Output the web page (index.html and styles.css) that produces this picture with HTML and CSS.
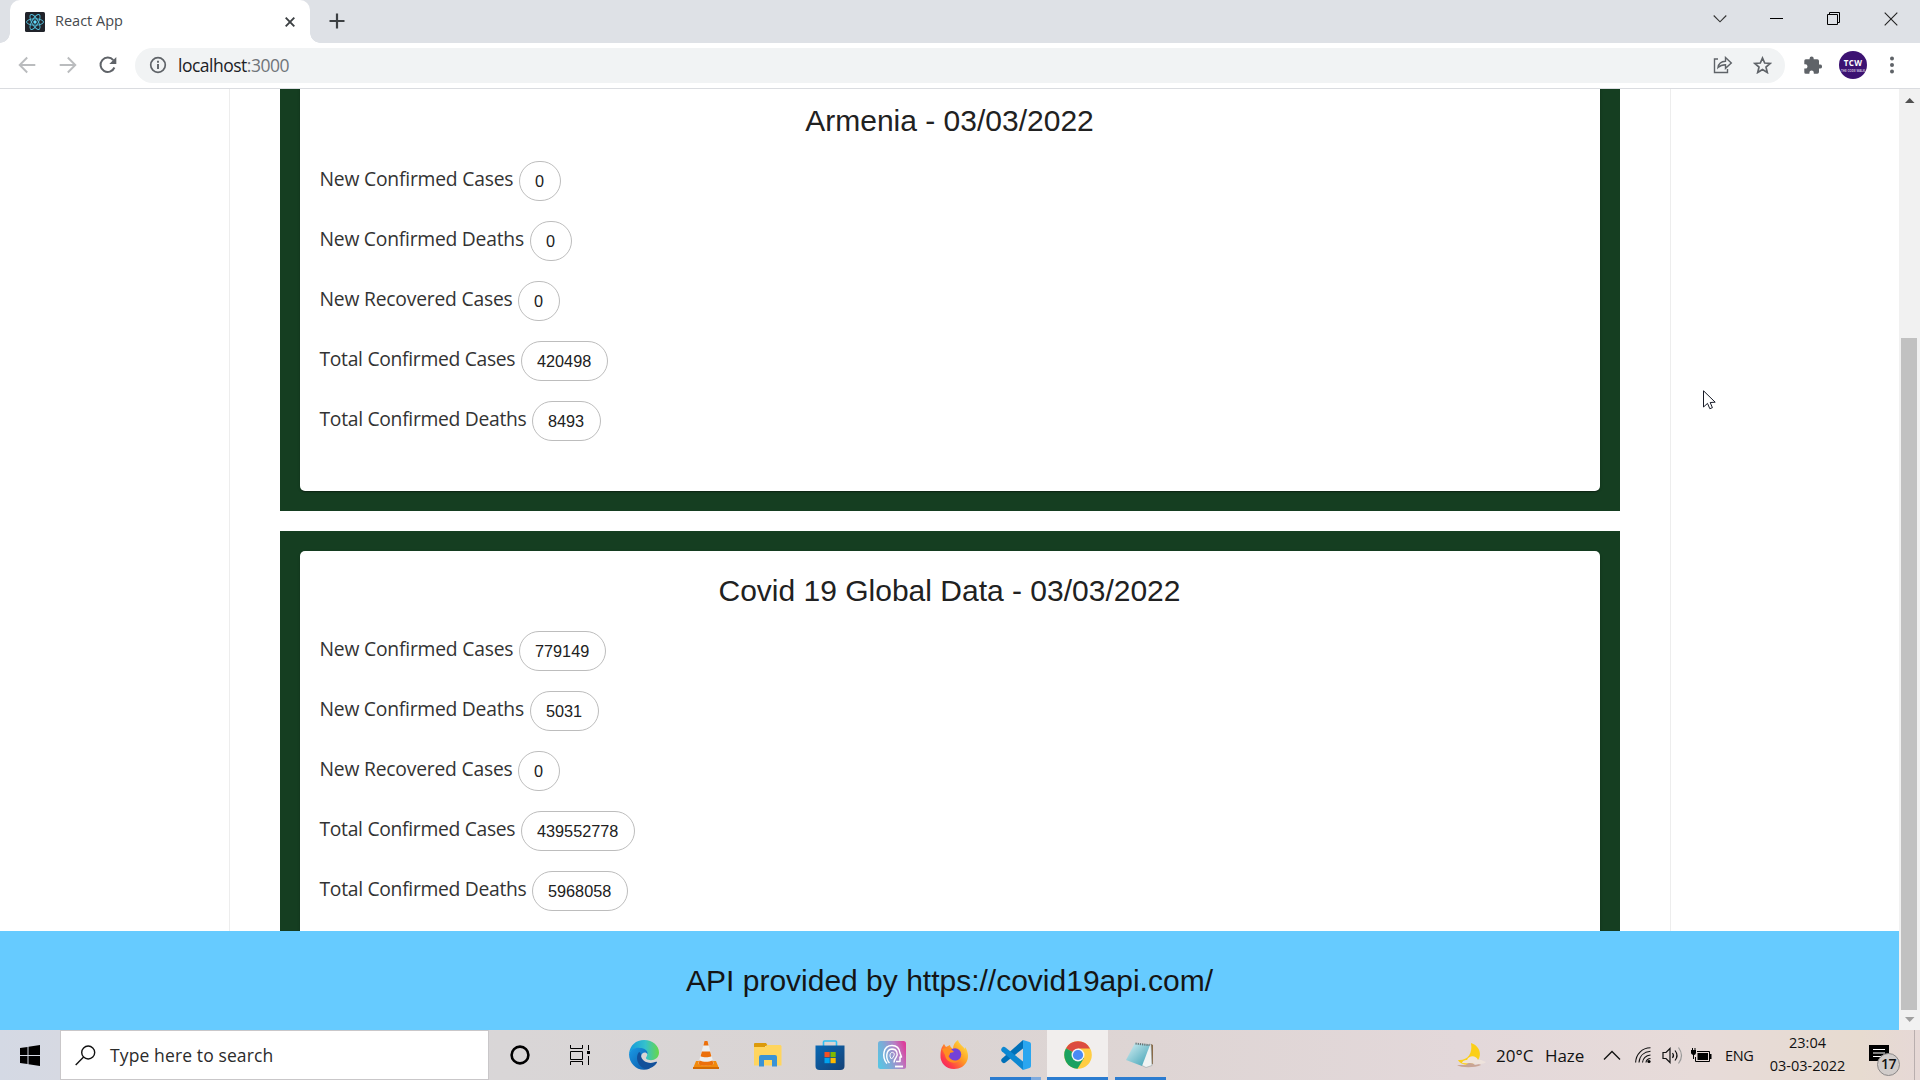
FILE: index.html
```html
<!DOCTYPE html>
<html lang="en">
<head>
<meta charset="utf-8">
<title>React App</title>
<link rel="stylesheet" href="styles.css">
</head>
<body>
<header class="tabstrip">
  <div class="tab">
    <svg class="favicon" width="20" height="20" viewBox="0 0 20 20"><rect width="20" height="20" rx="1.5" fill="#20232a"/><g fill="none" stroke="#53c1de" stroke-width=".9"><ellipse cx="10" cy="10" rx="8.5" ry="3.2"/><ellipse cx="10" cy="10" rx="8.5" ry="3.2" transform="rotate(60 10 10)"/><ellipse cx="10" cy="10" rx="8.5" ry="3.2" transform="rotate(120 10 10)"/></g><circle cx="10" cy="10" r="1.7" fill="#61dafb"/></svg>
    <span class="tab-title">React App</span>
    <svg class="tab-close" width="10" height="10" viewBox="0 0 10 10"><path d="M.7.7l8.6 8.6M9.3.7L.7 9.3" stroke="#3c4043" stroke-width="1.9"/></svg>
  </div>
  <svg class="new-tab" width="16" height="16" viewBox="0 0 16 16"><path d="M8 .5v15M.5 8h15" stroke="#3c4043" stroke-width="2.2"/></svg>
  <div class="window-controls">
    <svg width="14" height="14" viewBox="0 0 14 14"><path d="M.7 3.500l6.300 6.300L13.300 3.500" fill="none" stroke="#333" stroke-width="1.1"/></svg>
    <svg width="14" height="14" viewBox="0 0 14 14"><path d="M0 6.500h13" stroke="#000" stroke-width="1"/></svg>
    <svg width="14" height="14" viewBox="0 0 14 14"><path d="M2.500 2.500v-2h10v10h-2M.5 2.500h10v10H.5z" fill="none" stroke="#000"/></svg>
    <svg width="14" height="14" viewBox="0 0 14 14"><path d="M.7.7l12.600 12.600M13.300.7L.7 13.300" stroke="#222" stroke-width="1.100"/></svg>
  </div>
</header>
<nav class="toolbar">
  <svg class="tool-back" width="18" height="18" viewBox="0 0 18 18"><path d="M17.300 9H2M9.200 1.500L1.700 9l7.500 7.500" fill="none" stroke="#babcbe" stroke-width="1.900"/></svg>
  <svg class="tool-forward" width="18" height="18" viewBox="0 0 18 18"><path d="M.7 9H16M8.800 1.500L16.300 9l-7.500 7.500" fill="none" stroke="#babcbe" stroke-width="1.900"/></svg>
  <svg class="tool-reload" width="18" height="18" viewBox="0 0 18 18"><path d="M15.400 11.500A7.200 7.200 0 1 1 14.300 4.200" fill="none" stroke="#5f6368" stroke-width="2"/><path d="M17.300 1v7h-7z" fill="#5f6368"/></svg>
  <div class="omnibox">
    <svg class="info" width="18" height="18" viewBox="0 0 18 18"><circle cx="9" cy="9" r="7.300" fill="none" stroke="#5f6368" stroke-width="1.700"/><path d="M9 8v5M9 4.700v2" stroke="#5f6368" stroke-width="1.900"/></svg>
    <span class="url">localhost<span class="port">:3000</span></span>
    <svg class="share" width="20" height="18" viewBox="0 0 20 18"><path d="M5 3H1.500v13.500h13V13M5 11.500C5.500 8 8 5.400 12.500 5.200V1.500L18.300 7l-5.800 5.300V8.800C9 8.800 7 9.600 5 11.500z" fill="none" stroke="#5f6368" stroke-width="1.400"/></svg>
    <svg class="star" width="19" height="18" viewBox="0 0 19 18"><path d="M9.500 2l2.200 5 5.500.5-4.200 3.600 1.300 5.400-4.800-2.900-4.800 2.900L6 11.100 1.800 7.500 7.300 7z" fill="none" stroke="#5f6368" stroke-width="1.700"/></svg>
  </div>
  <svg class="puzzle" width="18" height="18" viewBox="0 0 18 18"><path d="M16 8.500h-1V5a1.700 1.700 0 0 0-1.700-1.700H9.700V2.500a2 2 0 0 0-4.100 0v.8H1.800A1.500 1.500 0 0 0 .3 4.800v3.400h1a2.200 2.200 0 0 1 0 4.400h-1v3.600a1.500 1.500 0 0 0 1.500 1.500h3.600v-1a2.200 2.200 0 0 1 4.400 0v1h3.500a1.700 1.700 0 0 0 1.700-1.700v-3.400h1a2 2 0 0 0 0-4.100z" fill="#5f6368"/></svg>
  <div class="avatar"><span class="avatar-name">TCW</span><span class="avatar-sub">THE CODE WALK</span></div>
  <svg class="dots" width="4" height="18" viewBox="0 0 4 18"><g fill="#5f6368"><circle cx="2" cy="2.500" r="2"/><circle cx="2" cy="9" r="2"/><circle cx="2" cy="15.500" r="2"/></g></svg>
</nav>
<div class="viewport">
  <div class="page">
    <main class="container">
      <section class="panel"><div class="card">
        <h2>Armenia - 03/03/2022</h2>
        <div class="row"><span class="label new-cases">New Confirmed Cases</span><span class="chip">0</span></div>
        <div class="row"><span class="label new-deaths">New Confirmed Deaths</span><span class="chip">0</span></div>
        <div class="row"><span class="label recovered">New Recovered Cases</span><span class="chip">0</span></div>
        <div class="row"><span class="label total-cases">Total Confirmed Cases</span><span class="chip">420498</span></div>
        <div class="row"><span class="label total-deaths">Total Confirmed Deaths</span><span class="chip">8493</span></div>
      </div></section>
      <section class="panel"><div class="card">
        <h2>Covid 19 Global Data - 03/03/2022</h2>
        <div class="row"><span class="label new-cases">New Confirmed Cases</span><span class="chip">779149</span></div>
        <div class="row"><span class="label new-deaths">New Confirmed Deaths</span><span class="chip">5031</span></div>
        <div class="row"><span class="label recovered">New Recovered Cases</span><span class="chip">0</span></div>
        <div class="row"><span class="label total-cases">Total Confirmed Cases</span><span class="chip">439552778</span></div>
        <div class="row"><span class="label total-deaths">Total Confirmed Deaths</span><span class="chip">5968058</span></div>
      </div></section>
    </main>
    <footer class="footer">API provided by https://covid19api.com/</footer>
  </div>
  <div class="scrollbar">
    <svg width="21" height="21" viewBox="0 0 21 21"><path d="M6 14h9.500L10.700 9z" fill="#505050"/></svg>
    <div class="thumb"></div>
    <svg width="21" height="20" viewBox="0 0 21 20"><path d="M6 7h9.500l-4.800 5z" fill="#a0a0a0"/></svg>
  </div>
  <svg class="cursor" width="14" height="21" viewBox="0 0 14 21"><path d="M.5.8v16.200l4-3.600 2.300 5.300 2.600-1-2.200-5.200 5-.3z" fill="#fff" stroke="#161a26" stroke-width="1"/></svg>
</div>
<div class="taskbar">
  <div class="start"><svg width="20" height="21" viewBox="0 0 20 21"><path d="M0 3l7.500-1v8H0zM8.500 1.800L20 0v10H8.500zM0 11h7.500v8L0 18zM8.500 11H20v10l-11.500-1.800z"/></svg></div>
  <div class="search">
    <svg width="21" height="21" viewBox="0 0 21 21"><circle cx="13.200" cy="7.500" r="6.500" fill="none" stroke="#111" stroke-width="1.400"/><path d="M8.600 12L.7 20" stroke="#111" stroke-width="1.400"/></svg>
    <span>Type here to search</span>
  </div>
  <div class="system-button"><svg width="20" height="20" viewBox="0 0 20 20"><circle cx="10" cy="10" r="8.400" fill="none" stroke="#000" stroke-width="2.600"/></svg></div>
  <div class="system-button task-view"><svg width="20" height="20" viewBox="0 0 20 20"><path d="M.5 0v3.500h12V0M.5 20v-3.500h12V20M.5 6.500h12v8H.5zM18.500 0v5M18.500 11v9" fill="none" stroke="#000"/><path d="M17 6h3v3h-3z"/></svg></div>
  <div class="apps">
    <div class="app"><svg width="30" height="30" viewBox="0 0 30 30">
      <defs><linearGradient id="edge-top" x1="0" x2="1"><stop offset="0" stop-color="#1499dc"/><stop offset=".55" stop-color="#35c1cc"/><stop offset="1" stop-color="#67d847"/></linearGradient><linearGradient id="edge-left" x1="0" x2="1" y2="1"><stop offset="0" stop-color="#1a9be6"/><stop offset="1" stop-color="#0b55a5"/></linearGradient></defs>
      <path d="M0 14C1 5 7 0 15 0c9 0 15 6 15 12.500 0 5-4 7.700-8 7.700-4.500 0-6-1.700-4.500-3.400 1.500-2 1-6-4-7.800C8 7.500 3 9 0 14z" fill="url(#edge-top)"/>
      <path d="M0 14C2 9 7 7 11 8c5 0 8 3 7.500 6-2-3-6-1.500-6.500 2.500-.4 5 3 10 9 12-10 4.500-21-3-21-14.500z" fill="url(#edge-left)"/>
      <path d="M10 12c-4 5-2 14 6 17 6 0 10-3 12-6.500.3-.7-.4-1-1-.7-7 3-15-.5-15-6.800 0-1.500-1-3-2-3z" fill="#12509a"/></svg></div>
    <div class="app"><svg width="28" height="30" viewBox="0 0 28 30"><path d="M4 21h20l3 7.500H1z" fill="#f28a0b"/><path d="M1 27h26v2H1z" fill="#d36a02"/><path d="M12.500 1h3l6.300 23c-4 2.300-11.600 2.300-15.600 0z" fill="#eceff0"/><path d="M12.500 1h3l1.100 4.500h-5.200zM9.900 11.500h8.200l1.300 4.700c-3 1.300-7.800 1.300-10.800 0zM7.500 20.500c4 1.800 9 1.800 13 0l1.200 3.700c-4 2.200-11.400 2.200-15.400 0z" fill="#ec700b"/></svg></div>
    <div class="app"><svg width="28" height="24" viewBox="0 0 28 24"><path d="M0 1q0-1 1-1h11l2 3h-3v4H0z" fill="#dc9a0a"/><path d="M0 4h11l2-2h13.500l1 1v19.500H0z" fill="#ffd55e"/><path d="M5 23.500V14q0-2 2-2h14q2 0 2 2v9.500h-5V17H10v6.500z" fill="#3a93d6"/></svg></div>
    <div class="app"><svg width="30" height="30" viewBox="0 0 30 30"><defs><linearGradient id="store" x2="1" y2="1"><stop stop-color="#0868b4"/><stop offset="1" stop-color="#164277"/></linearGradient></defs><path d="M8.500 6V2q0-1 1-1h11q1 0 1 1v4" fill="none" stroke="#2ec0f4" stroke-width="1.600"/><path d="M.5 5.500h29V26q0 4-4 4h-21q-4 0-4-4z" fill="url(#store)"/><path d="M9.500 12h5.200v5.200H9.500z" fill="#f25022"/><path d="M15.500 12h5.200v5.200h-5.200z" fill="#7fba00"/><path d="M9.500 18h5.200v5.200H9.500z" fill="#00a4ef"/><path d="M15.500 18h5.200v5.200h-5.200z" fill="#ffb900"/></svg></div>
    <div class="app"><svg width="28" height="28" viewBox="0 0 28 28"><defs><linearGradient id="msi" x1="0" y1=".65" x2="1" y2=".3"><stop offset="0" stop-color="#5cc3e2"/><stop offset=".35" stop-color="#7fa9d6"/><stop offset=".7" stop-color="#b77fc4"/><stop offset="1" stop-color="#dc3f9c"/></linearGradient></defs><rect width="28" height="28" rx="2.500" fill="url(#msi)"/><g fill="none" stroke="#fff" stroke-linejoin="round"><path d="M9 22.500C3.500 16 5 4.500 14 4.500c5.500 0 7.500 3.500 8 7.500l1.500 4H22v4.500h-4" stroke-width="1.500"/><path d="M11.500 22c-4-4-4-13.500 2.500-14 5 0 6.500 5 4 8.500-1.500 2-2 3-2 5" stroke-width="1.400"/><path d="M13.500 18c-3-3-1-7.500 1.500-6.500 2.500 1 1 4-1.500 6.500z" stroke-width="1"/></g><path d="M17 25.500h8" stroke="#fff" stroke-width="1.800"/></svg></div>
    <div class="app"><svg width="29" height="30" viewBox="0 0 29 30"><defs><linearGradient id="fox" x1="1" x2="0" y2="1"><stop offset="0" stop-color="#fff24a"/><stop offset=".45" stop-color="#ff9a24"/><stop offset=".75" stop-color="#ff3e48"/><stop offset="1" stop-color="#e91878"/></linearGradient></defs><path d="M2 7c1-1 1-2 2-3l2 3 4-2c0 1 1 3 3 4 0-4 2-7 5-9 1 4 5 6 7 9v-2c3 4 4 10 2 14-2 5-7 8-13 8C6 29 0 23 .5 15 .6 12 1 9 2 7z" fill="url(#fox)"/><circle cx="15" cy="14.500" r="6.200" fill="#7541d8"/><path d="M2 9c4-2 9-1 12 3l-4 1c0 2-1 3-2 3 2 4 7 6 12 4-4 5-14 3-15-5z" fill="#ff8f22"/></svg></div>
    <div class="app vscode"><svg width="30" height="30" viewBox="0 0 30 30"><path d="M22 0v8.500L4.500 22.500Q2.500 24 .8 22q-1.300-2 0-3.300z" fill="#0070b8"/><path d="M22 30v-8.500L4.500 7.500Q2.500 6 .8 8q-1.300 2 0 3.300z" fill="#0d88d2"/><path d="M22 0l6.500 2q1.500.6 1.500 2v22q0 1.400-1.500 2L22 30z" fill="#2aa6f0"/></svg></div>
    <div class="app chrome"><svg width="28" height="28" viewBox="0 0 28 28"><circle cx="14" cy="14" r="13.800" fill="#ffcd42"/><path d="M14 14L2 7.200A13.800 13.800 0 0 1 26 7.500H14z" fill="#dc4c3f"/><path d="M14 14L2 7.200A13.800 13.800 0 0 0 13.500 27.800L20 17z" fill="#1aa260"/><circle cx="14" cy="14" r="6.500" fill="#f5f5f5"/><circle cx="14" cy="14" r="5.100" fill="#4a8af4"/></svg></div>
    <div class="app notepad"><svg width="28" height="28" viewBox="0 0 28 28"><defs><linearGradient id="note" x2="1" y2="1"><stop stop-color="#d8f1f5"/><stop offset="1" stop-color="#3a9fb3"/></linearGradient></defs><path d="M25 3l2 1v19l-4 1z" fill="#8a6b47"/><path d="M23 3l2 .5 1 21-6 2-5-2.500z" fill="#f0f3f3" stroke="#95a0a2" stroke-width=".6"/><path d="M9 2l15 2-8 21L0 19z" fill="url(#note)"/><path d="M9.500 2.500l14 1.600" stroke="#6a7273" stroke-width="2" stroke-dasharray="1.200 1"/></svg></div>
  </div>
  <div class="tray">
    <svg class="moon" width="30" height="25" viewBox="0 0 30 25"><path d="M14 0c10 3 12 15 4 20C11 24 3 21 1 17c9 1 15-6 13-17z" fill="#fbcf18"/><path d="M5 20c1-3 4-3 5-3 2-5 9-5 11 0 3-1 4 1 8 2-2 2-6 2-9 2z" fill="#eee3dc"/><path d="M0 22h9c2-3 7-2 9 0 4-1 5-1 6 0-6 3-20 3-24 0z" fill="#c9a595"/></svg>
    <span class="temp">20°C</span><span class="haze">Haze</span>
    <svg class="caret" width="18" height="10" viewBox="0 0 18 10"><path d="M1 9.500l8-8 8 8" fill="none" stroke="#111" stroke-width="1.300"/></svg>
    <svg class="wifi" width="17" height="17" viewBox="0 0 17 17"><g fill="none" stroke="#111" stroke-width="1.100"><path d="M.6 15.500C1 7 7 1 15.500.8M4 15.500C4.500 9 9 4.800 15.500 4.300M7.500 15.500C8 11.500 11 8.500 15.500 8M11 15.500c0-2 2-4 4.500-4"/></g><circle cx="14" cy="14.500" r="1.600"/></svg>
    <svg class="speaker" width="21" height="19" viewBox="0 0 21 19"><path d="M1 6.500h3l4-4v14l-4-4H1z" fill="none" stroke="#111" stroke-width="1.200"/><path d="M10.500 7q2 2.500 0 5M13 4.500q4 5 0 10" fill="none" stroke="#111" stroke-width="1.200"/><path d="M16.500 1.500q6 8 0 16" fill="none" stroke="#999" stroke-width="1.200"/></svg>
    <svg class="battery" width="21" height="15" viewBox="0 0 21 15"><path d="M6 3.500h12.500v10H4.500V9" fill="none" stroke="#000"/><path d="M6.500 5H17v7H6.500zM19 6h1.500v5H19zM0 2h5v3q-.5 2-2 2v4H2V7Q0 6 0 5zM1 0h1v2H1zM3.500 0h1v2h-1z"/></svg>
    <span class="lang">ENG</span>
    <div class="clock"><span class="time">23:04</span><span class="date">03-03-2022</span></div>
    <div class="notifications">
      <svg width="20" height="20" viewBox="0 0 20 20"><path d="M0 0h20v16h-7l-3 3v-3H0z"/><path d="M4 4.500h12M4 8h12M4 11.500h8" stroke="#fff" stroke-width="1.200"/></svg>
      <span class="badge">17</span>
    </div>
    <div class="show-desktop"></div>
  </div>
</div>
</body>
</html>
```
FILE: styles.css
```css
* { box-sizing: border-box; }
body { margin: 0; width: 1920px; height: 1080px; overflow: hidden; display: flex; flex-direction: column; background: #fff; font-family: "Open Sans", "Noto Sans", sans-serif; }
svg { display: block; flex: none; }
span { white-space: nowrap; }

.tabstrip { height: 43px; flex: none; display: flex; background: #dee1e6; }
.tab { position: relative; margin-left: 10px; width: 300px; height: 43px; padding: 0 15px; display: flex; align-items: center; background: #fff; border-radius: 10px 10px 0 0; }
.tab::before, .tab::after { content: ""; position: absolute; bottom: 0; width: 10px; height: 10px; }
.tab::before { left: -10px; background: radial-gradient(circle at 0 0, transparent 9.5px, #fff 10px); }
.tab::after { right: -10px; background: radial-gradient(circle at 100% 0, transparent 9.5px, #fff 10px); }
.tab-title { margin-left: 10px; font-size: 14.5px; line-height: 20px; color: #45494d; padding-bottom: 2px; }
.tab-close { margin-left: auto; }
.new-tab { margin: 13px 0 0 19px; }
.window-controls { margin-left: auto; display: flex; gap: 43px; padding: 12px 22px 0 0; }

.toolbar { height: 46px; flex: none; display: flex; align-items: center; border-bottom: 1px solid #dadce0; padding: 0 0 1px 18px; }
.tool-forward { margin-left: 23px; }
.tool-reload { margin-left: 22px; }
.omnibox { margin-left: 18px; width: 1650px; height: 35px; border-radius: 18px; background: #f1f3f4; display: flex; align-items: center; padding-left: 14px; }
.url { margin-left: 11px; font-size: 17.5px; line-height: 24px; color: #202124; letter-spacing: -.5px; padding-bottom: 1px; }
.port { color: #70757a; }
.share { margin-left: auto; }
.star { margin: 0 13px 0 20px; }
.puzzle { margin-left: 19px; }
.avatar { margin-left: 17px; width: 28px; height: 28px; border-radius: 50%; overflow: hidden; background: #3c1272; color: #fff; display: flex; flex-direction: column; align-items: center; }
.avatar-name { margin-top: 7px; font-size: 8px; font-weight: 700; line-height: 10px; letter-spacing: .3px; }
.avatar-sub { margin-top: 1px; font-size: 3px; font-weight: 700; line-height: 5px; color: #c9bddb; }
.dots { margin-left: 23px; }

.viewport { position: relative; height: 941px; flex: none; display: flex; overflow: hidden; }
.page { width: 1899px; height: 941px; display: flex; flex-direction: column; }
.container { width: 1442px; height: 842px; margin: 0 auto; overflow: hidden; border: solid #ededed; border-width: 0 1px; padding: 0 50px; }
.panel { background: #153e21; padding: 20px; height: 450px; margin-bottom: 20px; }
.panel:first-child { margin-top: -28px; }
.card { height: 410px; background: #fff; border-radius: 5px; padding: 20px 20px 0; box-shadow: 0 2px 1px -1px rgba(0,0,0,.3), 0 1px 3px rgba(0,0,0,.2); }
h2 { margin: 0 0 20px; font: 400 30px/40px "Liberation Sans", Arial, sans-serif; color: #212121; text-align: center; }
.row { display: flex; height: 60px; align-items: flex-start; }
.label { font-size: 19.3px; line-height: 36px; color: #333; }
.new-cases { width: 199px; letter-spacing: -.2px; }
.new-deaths { width: 210px; letter-spacing: -.23px; }
.recovered { width: 198px; letter-spacing: -.2px; }
.total-cases { width: 201px; letter-spacing: -.3px; }
.total-deaths { width: 212px; letter-spacing: -.29px; }
.chip { height: 40px; border: 1px solid #bdbdbd; border-radius: 20px; padding: 0 15.5px; font: 16.25px/38px "Liberation Sans", Arial, sans-serif; color: #212121; }
.footer { height: 99px; background: #66cbff; color: #151515; text-align: center; font: 30px/99px "Liberation Sans", Arial, sans-serif; }
.scrollbar { width: 21px; background: #f1f1f1; display: flex; flex-direction: column; }
.thumb { margin: 228px 3px 0 2px; height: 672px; background: #c1c1c1; }
.cursor { position: absolute; left: 1703px; top: 301px; }

.taskbar { height: 50px; flex: none; display: flex; background: linear-gradient(90deg, #d4d9e4 0, #d6d9e2 60px, #d9d6d7 500px, #dad4d3 880px, #ded5d4 1150px, #e3d8da 1460px, #e7dbd9 1700px, #e7dbd0 1860px, #e6d8d6 1920px); color: #111; }
.start { width: 60px; display: flex; align-items: center; justify-content: center; }
.search { width: 429px; border: 1px solid #c9c7c9; background: #fff; display: flex; align-items: center; padding-left: 14px; }
.search span { margin-left: 14px; font-size: 17.5px; color: #2b2b2b; letter-spacing: .12px; }
.system-button { width: 61px; display: flex; align-items: center; justify-content: center; }
.task-view { padding-right: 2px; }
.apps { display: flex; margin-left: 2px; }
.app { width: 62px; display: flex; align-items: center; justify-content: center; }
.vscode { background: linear-gradient(90deg, #2b7cd0 41px, #7eaade 41px) 5px 47px / 51px 3px no-repeat; }
.chrome { background: linear-gradient(#2b7cd0, #2b7cd0) 0 47px / 61px 3px no-repeat, linear-gradient(#f1eeed, #f1eeed) 0 0 / 61px 50px no-repeat; }
.notepad { background: linear-gradient(#2b7cd0, #2b7cd0) 6px 47px / 51px 3px no-repeat; }
.tray { margin-left: auto; width: 463px; display: flex; align-items: center; }
.temp { width: 49px; margin-left: 9px; font-size: 17px; padding-top: 1px; }
.haze { width: 58px; font-size: 17px; padding-top: 1px; letter-spacing: -.1px; }
.wifi { margin-left: 14px; }
.speaker { margin-left: 10px; }
.battery { margin-left: 8px; }
.lang { width: 44px; margin-left: 13px; font-size: 14.5px; letter-spacing: -.3px; }
.clock { width: 77px; display: flex; flex-direction: column; align-items: center; font-size: 14.5px; line-height: 23px; padding-bottom: 2px; }
.notifications { position: relative; width: 20px; height: 20px; margin-left: 23px; }
.badge { position: absolute; left: 8px; top: 8px; width: 23px; height: 23px; border: 1px solid #8b8888; border-radius: 50%; background: #d1ccca; font-size: 14px; font-weight: 600; line-height: 20px; text-align: center; letter-spacing: -.4px; }
.show-desktop { margin-left: 25px; width: 6px; height: 50px; border-left: 1px solid #b9aeae; }
```
